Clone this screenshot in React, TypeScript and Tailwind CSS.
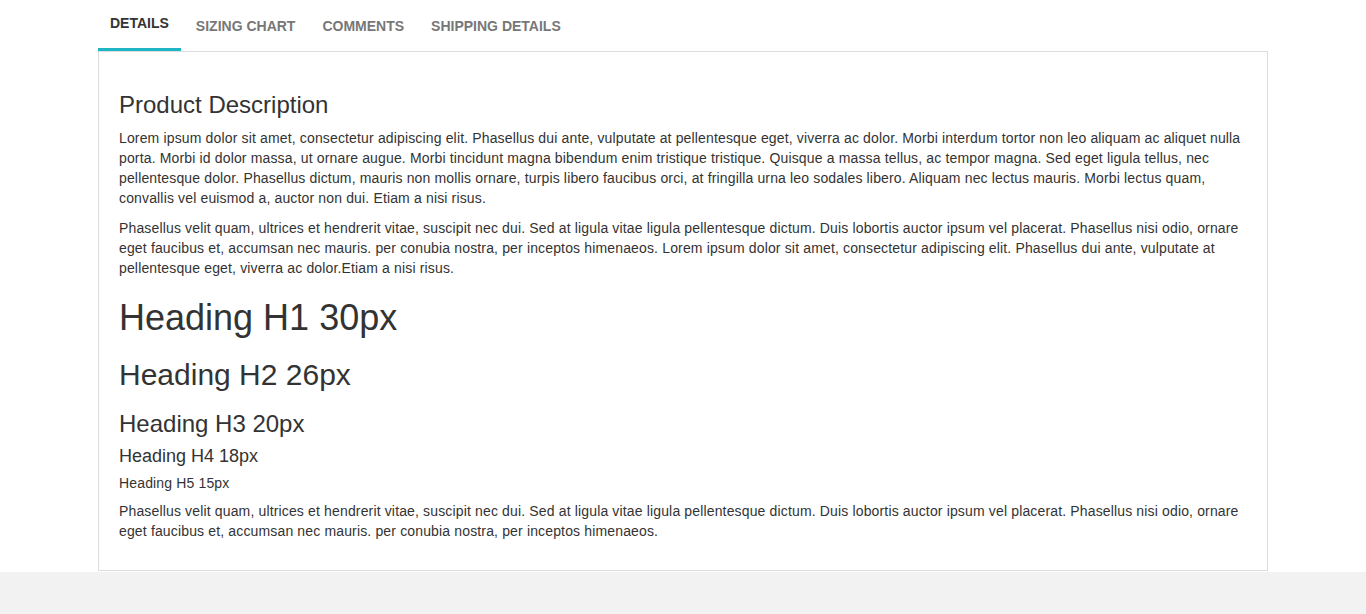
const tabs = ["Details", "Sizing Chart", "Comments", "Shipping Details"];

const App = () => {
  return (
    <div className="min-h-screen bg-[#f2f2f2] font-['Liberation_Sans',Arial,sans-serif] text-[#333]">
      <section className="bg-white pb-[1px]">
        <div className="mx-auto w-[1170px]">
          <ul className="flex h-[51px]">
            {tabs.map((tab, index) => (
              <li key={tab} className="mr-[3px]">
                <a
                  href="#"
                  className={
                    index === 0
                      ? "block h-[51px] border-b-[3px] border-[#1fb5c5] px-3 pt-[14px] text-[14px] font-bold uppercase leading-[18px] text-[#333]"
                      : "block h-[51px] px-3 pt-[17px] text-[14px] font-bold uppercase leading-[18px] text-[#777]"
                  }
                >
                  {tab}
                </a>
              </li>
            ))}
          </ul>
          <div className="border border-[#ddd] p-5 text-[14px] leading-[20px] tracking-[0.15px]">
            <h3 className="mt-5 mb-[10px] text-[24px] leading-[1.1] tracking-normal">Product Description</h3>
            <p className="mb-[10px]">
              Lorem ipsum dolor sit amet, consectetur adipiscing elit. Phasellus dui ante, vulputate at
              pellentesque eget, viverra ac dolor. Morbi interdum tortor non leo aliquam ac aliquet nulla
              porta. Morbi id dolor massa, ut ornare augue. Morbi tincidunt magna bibendum enim tristique
              tristique. Quisque a massa tellus, ac tempor magna. Sed eget ligula tellus, nec pellentesque
              dolor. Phasellus dictum, mauris non mollis ornare, turpis libero faucibus orci, at fringilla
              urna leo sodales libero. Aliquam nec lectus mauris. Morbi lectus quam, convallis vel euismod
              a, auctor non dui. Etiam a nisi risus.
            </p>
            <p className="mb-[10px]">
              Phasellus velit quam, ultrices et hendrerit vitae, suscipit nec dui. Sed at ligula vitae
              ligula pellentesque dictum. Duis lobortis auctor ipsum vel placerat. Phasellus nisi odio,
              ornare eget faucibus et, accumsan nec mauris. per conubia nostra, per inceptos himenaeos.
              Lorem ipsum dolor sit amet, consectetur adipiscing elit. Phasellus dui ante, vulputate at
              pellentesque eget, viverra ac dolor.Etiam a nisi risus.
            </p>
            <h1 className="mt-5 mb-[10px] text-[36px] leading-[1.1] tracking-normal">Heading H1 30px</h1>
            <h2 className="mt-5 mb-[10px] text-[30px] leading-[1.1] tracking-normal">Heading H2 26px</h2>
            <h3 className="mt-5 mb-[10px] text-[24px] leading-[1.1] tracking-normal">Heading H3 20px</h3>
            <h4 className="mt-[9px] mb-[9px] text-[18px] leading-[1.1] tracking-normal">Heading H4 18px</h4>
            <h5 className="mt-[9px] mb-[9px] text-[14px] leading-[1.1]">Heading H5 15px</h5>
            <p className="mb-[9px]">
              Phasellus velit quam, ultrices et hendrerit vitae, suscipit nec dui. Sed at ligula vitae
              ligula pellentesque dictum. Duis lobortis auctor ipsum vel placerat. Phasellus nisi odio,
              ornare eget faucibus et, accumsan nec mauris. per conubia nostra, per inceptos himenaeos.
            </p>
          </div>
        </div>
      </section>
    </div>
  );
};

export default App;
